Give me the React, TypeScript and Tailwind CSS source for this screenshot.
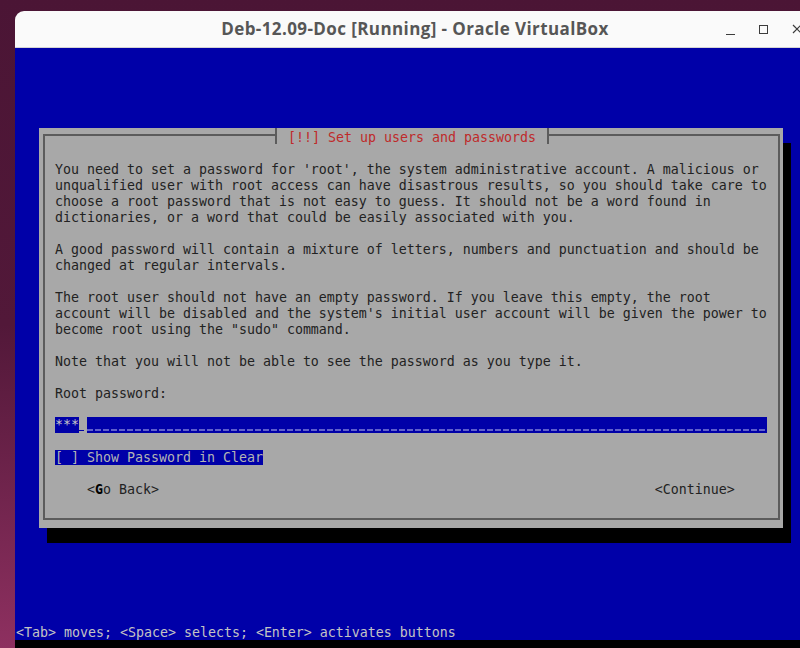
const mono = "font-['DejaVu_Sans_Mono',monospace] text-[13.29px]";

const body = [
  "You need to set a password for 'root', the system administrative account. A malicious or",
  "unqualified user with root access can have disastrous results, so you should take care to",
  "choose a root password that is not easy to guess. It should not be a word found in",
  "dictionaries, or a word that could be easily associated with you.",
  "",
  "A good password will contain a mixture of letters, numbers and punctuation and should be",
  "changed at regular intervals.",
  "",
  "The root user should not have an empty password. If you leave this empty, the root",
  "account will be disabled and the system's initial user account will be given the power to",
  'become root using the "sudo" command.',
  "",
  "Note that you will not be able to see the password as you type it.",
  "",
  "Root password:",
  "",
];

function TitleBar() {
  return (
    <div className="relative h-[37px] bg-[#fafafa] border-b border-[#d4d4d4] flex items-center justify-center">
      <span className="font-['Open_Sans',sans-serif] font-bold text-[17px] text-[#565656] tracking-[0.4px]">
        Deb-12.09-Doc [Running] - Oracle VirtualBox
      </span>
      <div className="absolute left-[708px] top-0 h-full flex items-center">
        <div className="w-[14px] h-[14px] flex items-end justify-center pb-[1px]">
          <div className="w-[9px] h-[1px] bg-[#3c3c3c]" />
        </div>
        <div className="ml-[22px] w-[9px] h-[9px] border border-[#3c3c3c]" />
        <svg className="ml-[24px]" width="10" height="10" viewBox="0 0 10 10">
          <path d="M1 1 L9 9 M9 1 L1 9" stroke="#3c3c3c" strokeWidth="1.2" />
        </svg>
      </div>
    </div>
  );
}

function Dialog() {
  return (
    <div className="w-[744px] h-[400px] bg-[#a8a8a8] shadow-[8px_15px_0_0_#000] pt-[6px] pl-[4px] pr-[3px]">
      <div className={`relative h-[386px] border-2 border-[#5c5c5c] pl-[10px] pt-[26px] text-[#222222] ${mono}`}>
        {/* title sits over the top frame line */}
        <div className="absolute left-[230px] top-[-8px] w-[274px] h-[16px] bg-[#a8a8a8] flex items-center">
          <div className="w-[2px] h-[16px] bg-[#5c5c5c]" />
          <span className="ml-[11px] mt-[3px] leading-[16px] whitespace-pre text-[#bf2a2a]">[!!] Set up users and passwords</span>
          <div className="ml-auto w-[2px] h-[16px] bg-[#5c5c5c]" />
        </div>

        {body.map((line, i) => (
          <div key={i} className="h-[16px] leading-[16px] whitespace-pre">
            {line}
          </div>
        ))}

        <div className="h-[16px] -mt-[1px] flex leading-[16px]">
          <span className="w-[24px] bg-[#0000a8] text-[#c8c8c8] whitespace-pre">***</span>
          <span className="w-[8px] flex items-end pb-[2px]">
            <span className="w-[5px] h-[1px] bg-[#0000a8]" />
          </span>
          <span className="w-[680px] bg-[#0000a8] flex flex-col justify-end pb-[2px]">
            <span className="h-[2px] bg-[repeating-linear-gradient(90deg,#6060cc_0_6px,transparent_6px_8px)]" />
          </span>
        </div>

        <div className="h-[17px]" />

        <div className="h-[16px] leading-[16px]">
          <span className="bg-[#0000a8] text-[#b4b4b4] whitespace-pre">[ ] Show Password in Clear</span>
        </div>

        <div className="h-[16px]" />

        <div className="h-[16px] leading-[16px] whitespace-pre">
          {"    <"}
          <span className="font-bold text-black">G</span>
          {"o Back>" + " ".repeat(62) + "<Continue>"}
        </div>
      </div>
    </div>
  );
}

export default function App() {
  return (
    <div className="w-[800px] h-[648px] overflow-hidden bg-gradient-to-b from-[#4b1535] via-[#521839] to-[#8e3060] pl-[15px] pt-[11px]">
      <div className="w-[800px] flex flex-col rounded-tl-[9px] overflow-hidden">
        <TitleBar />
        <div className="h-[592px] bg-[#0000a8] flex flex-col pl-[24px] pt-[80px]">
          <Dialog />
          <div className={`mt-auto -ml-[23px] h-[16px] leading-[18px] whitespace-pre text-[#c4c4c4] ${mono}`}>
            {"<Tab> moves; <Space> selects; <Enter> activates buttons"}
          </div>
        </div>
        <div className="h-[8px] bg-black" />
      </div>
    </div>
  );
}
